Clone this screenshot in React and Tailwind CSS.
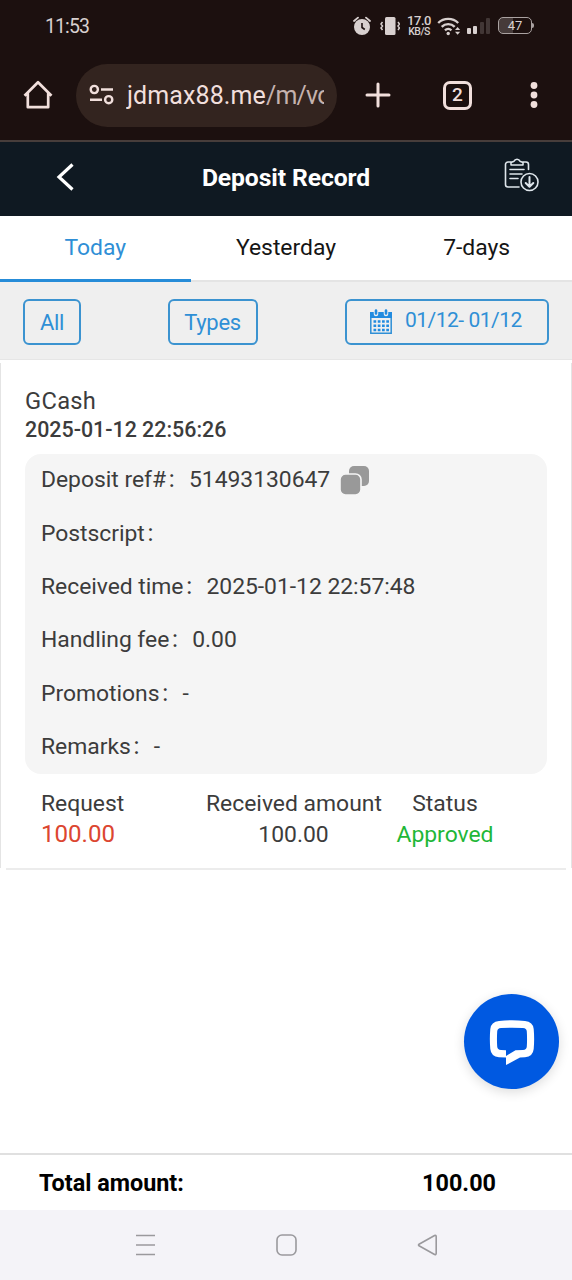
const tabs = ["Today", "Yesterday", "7-days"];

const details = [
  { label: "Deposit ref#", value: "51493130647", copy: true },
  { label: "Postscript", value: "" },
  { label: "Received time", value: "2025-01-12 22:57:48" },
  { label: "Handling fee", value: "0.00" },
  { label: "Promotions", value: "-" },
  { label: "Remarks", value: "-" },
];

const StatusBar = () => {
  return (
    <div className="flex h-[51px] items-center pl-[45px] text-[#d8d0cf]">
      <span className="w-[308px] pt-[2px] text-[19.5px] tracking-[-0.9px]">11:53</span>
      <svg width="18" height="20" viewBox="0 0 18 20" fill="none">
        <circle cx="9" cy="11" r="8" fill="currentColor" />
        <path d="M1 5l4-3.4M17 5l-4-3.4" stroke="currentColor" strokeWidth="1.8" strokeLinecap="round" />
        <path d="M9 7v4.5l2.8 2" stroke="#1c100f" strokeWidth="1.6" />
      </svg>
      <svg className="ml-[9px]" width="20" height="20" viewBox="0 0 20 20" fill="none">
        <rect x="5" y="1" width="10.5" height="18" rx="1.5" fill="currentColor" />
        <path d="M2.5 6L1 8l1.5 2L1 12l1.5 2M18 6l1.5 2-1.5 2 1.5 2-1.5 2" stroke="currentColor" strokeWidth="1.5" />
      </svg>
      <div className="ml-[7px] w-[24px] text-center font-medium whitespace-nowrap">
        <div className="text-[13px] leading-[11px] tracking-[-0.5px]">17.0</div>
        <div className="text-[10.5px] leading-[11px] tracking-[-0.5px]">KB/S</div>
      </div>
      <svg className="ml-[6px]" width="25" height="20" viewBox="0 0 25 20" fill="none" stroke="currentColor" strokeWidth="2.4">
        <path d="M1.2 7a14.3 14.3 0 0 1 20 0M4.7 10.8a9.2 9.2 0 0 1 13 0M8 14.3a4.6 4.6 0 0 1 6.4 0" />
        <circle cx="11.2" cy="17.5" r="1.7" fill="currentColor" stroke="none" />
        <path d="M18 14l2.6-3 2.6 3zM18 15.8l2.6 3 2.6-3z" fill="currentColor" stroke="none" />
      </svg>
      <svg className="ml-[5px]" width="24" height="18" viewBox="0 0 24 18" fill="currentColor">
        <rect x="0" y="11" width="4" height="6" rx="1" />
        <rect x="6" y="9" width="4" height="8" rx="1" />
        <rect x="13" y="5" width="4" height="12" rx="1" opacity=".2" />
        <rect x="19" y="1" width="4" height="16" rx="1" opacity=".2" />
      </svg>
      <div className="ml-[7px] flex h-[17px] w-[34px] items-center justify-center rounded-[5px] border-[1.5px] border-[#aaa2a1] bg-linear-to-r from-[#463b3a] from-45% to-transparent to-45% text-[13px]">
        47
      </div>
      <div className="h-[5px] w-[2px] rounded-r bg-[#aaa2a1]"></div>
    </div>
  );
};

const BrowserBar = () => {
  return (
    <div className="flex h-[89px] items-center pb-[1px] text-[#f1dfdc]">
      <svg className="ml-[23px]" width="30" height="30" viewBox="0 0 30 30" fill="none" stroke="currentColor" strokeWidth="2.7" strokeLinejoin="round">
        <path d="M1.5 15.8L15 2.2l13.5 13.6M4.8 13v14.2h20.4V13" />
      </svg>
      <div className="ml-[23px] flex h-[63px] w-[261px] items-center rounded-full bg-[#33241f] pl-[13px]">
        <svg className="shrink-0" width="25" height="22" viewBox="0 0 25 22" fill="none" stroke="currentColor" strokeWidth="2.4">
          <circle cx="5.3" cy="5.5" r="3.6" />
          <circle cx="19.7" cy="15.7" r="3.6" />
          <path d="M12 5.5h12M1 15.7h12" />
        </svg>
        <div className="ml-[12px] w-[198px] overflow-hidden pt-[2px] pl-[1px] text-[25px] tracking-[0.1px] whitespace-nowrap">
          jdmax88.me<span className="tracking-[-0.8px] text-[#c5b2ae]">/m/vo</span>
        </div>
      </div>
      <svg className="ml-[28px]" width="26" height="26" viewBox="0 0 26 26" stroke="currentColor" strokeWidth="3" strokeLinecap="round">
        <path d="M13 2v22M2 13h22" />
      </svg>
      <div className="ml-[52px] flex h-[29px] w-[29px] items-center justify-center rounded-[7px] border-[3px] border-[#f1dfdc] text-[19px] font-medium">
        2
      </div>
      <svg className="ml-[58px]" width="8" height="28" viewBox="0 0 8 28" fill="currentColor">
        <circle cx="4" cy="4.5" r="3.4" />
        <circle cx="4" cy="14" r="3.4" />
        <circle cx="4" cy="23.5" r="3.4" />
      </svg>
    </div>
  );
};

const Header = () => {
  return (
    <div className="flex h-[76px] items-center border-t-2 border-[#473d3b] bg-[#0f1922] text-white">
      <div className="w-[90px] pb-[4px] pl-[56px]">
        <svg width="18" height="28" viewBox="0 0 18 28" fill="none" stroke="currentColor" strokeWidth="3.2">
          <path d="M16.5 1.5L3 14l13.5 12.5" />
        </svg>
      </div>
      <h1 className="flex-1 pb-[3px] text-center text-[24.7px] font-bold tracking-[-0.1px]">Deposit Record</h1>
      <div className="w-[90px] pb-[9px] pl-[22px]">
        <svg width="35" height="35" viewBox="0 0 35 35" fill="none" stroke="#dfe6ec" strokeWidth="1.6" strokeLinecap="round" strokeLinejoin="round">
          <path d="M7 5H4a2.5 2.5 0 0 0-2.5 2.5v20A2.5 2.5 0 0 0 4 30h11M19 5h3a2.5 2.5 0 0 1 2.5 2.500v5" />
          <path d="M7 8V5.5l3-1.200a3.200 3.200 0 0 1 6 0l3 1.200V8zM6 12.500h14M6 17h12M6 21.500h8" />
          <circle cx="25.5" cy="25" r="8.5" />
          <path d="M25.5 20v9.5M21.7 26l3.8 3.8 3.8-3.8" strokeWidth="2" />
        </svg>
      </div>
    </div>
  );
};

const Filters = () => {
  return (
    <div className="flex h-[78px] items-center justify-between border-b border-[#e6e6e6] bg-[#efefef] px-[23px] pt-[2px] text-[22px] tracking-[-0.3px] text-[#2f8fd6]">
      <button className="h-[46px] w-[58px] rounded-md border-2 border-[#3b93d0] pt-[2px]">All</button>
      <button className="mr-[1px] h-[46px] w-[90px] rounded-md border-2 border-[#3b93d0] pt-[2px]">Types</button>
      <button className="flex h-[46px] w-[204px] items-center rounded-md border-2 border-[#3b93d0] pl-[23px]">
        <svg width="22" height="26" viewBox="0 0 22 26" fill="none">
          <path d="M.8 5h20.4v19.2H.8z" stroke="#2f8fd6" strokeWidth="1.5" />
          <path d="M0 3h22v6H0z" fill="#218be0" />
          <path d="M6 1v4M16 1v4" stroke="#efefef" strokeWidth="4.5" strokeLinecap="round" />
          <path d="M6 1.500v3M16 1.500v3" stroke="#218be0" strokeWidth="2.6" strokeLinecap="round" />
          <path d="M3.5 12.500h15.500M3.500 16.700h15.500M3.500 21h15.500" stroke="#218be0" strokeWidth="2.600" strokeDasharray="2.700 1.560" />
        </svg>
        <span className="mb-[2px] ml-[13px] text-[21px] tracking-[-0.5px]">01/12- 01/12</span>
      </button>
    </div>
  );
};

const RecordCard = () => {
  return (
    <div className="mt-[3px] text-[#3c3c3c]">
      <div className="h-[505px] border-x border-[#e4e4e4] px-6 pt-[24px]">
        <div className="text-[23.7px] leading-[29px] tracking-[0.3px]">GCash</div>
        <div className="text-[21.4px] leading-[27px] font-medium">2025-01-12 22:56:26</div>
        <div className="mt-[11px] grid h-[320px] grid-rows-6 rounded-2xl bg-[#f5f5f5] pl-[16px] text-[22.9px] tracking-[-0.03px]">
          {details.map((item) => (
            <div key={item.label} className="flex items-center">
              <span>{item.label}</span>
              <span className="w-[23px] pt-[2px] pl-[1px] text-[19px]">：</span>
              <span>{item.value}</span>
              {item.copy && (
                <svg className="ml-[10px]" width="29" height="29" viewBox="0 0 29 29" fill="#999">
                  <rect x="9" y="0" width="20" height="20" rx="5" />
                  <rect x="0" y="8" width="21" height="21" rx="5.5" stroke="#f5f5f5" strokeWidth="1.6" />
                </svg>
              )}
            </div>
          ))}
        </div>
        <div className="mt-[14px] flex pl-[16px] text-[22.9px] leading-[31px]">
          <div className="w-[165px]">
            <div>Request</div>
            <div className="text-[24.1px] text-[#dc4630]">100.00</div>
          </div>
          <div className="w-[175px] text-center whitespace-nowrap">
            <div>Received amount</div>
            <div>100.00</div>
          </div>
          <div className="ml-[15px] w-[98px] text-center">
            <div>Status</div>
            <div className="text-[#1fb738]">Approved</div>
          </div>
        </div>
      </div>
      <div className="mx-[6px] border-b-2 border-[#ececec]"></div>
    </div>
  );
};

const App = () => {
  return (
    <div className="relative flex h-[1280px] w-[572px] flex-col bg-white font-[Roboto,'Noto_Sans_CJK_SC',sans-serif]">
      <div className="bg-[#1c100f]">
        <StatusBar />
        <BrowserBar />
      </div>
      <Header />
      <div className="grid h-[66px] grid-cols-3 text-center text-[22.9px] leading-[63px] text-[#151515]">
        {tabs.map((tab, i) => (
          <div key={tab} className={i === 0 ? "h-[66px] border-b-3 border-[#268cd8] text-[#2f8fd6]" : "h-[66px] border-b-2 border-[#e4e4e4]"}>
            {tab}
          </div>
        ))}
      </div>
      <Filters />
      <RecordCard />

      {/* live chat */}
      <button className="absolute top-[994px] right-[13px] flex h-[95px] w-[95px] items-center justify-center rounded-full bg-[#0059e1] shadow-[0_3px_12px_rgba(0,0,0,0.14)]">
        <svg width="46" height="46" viewBox="0 0 46 46" fill="none">
          <path
            fill="#fff"
            fillRule="evenodd"
            d="M10 2Q23 .6 36 2Q44 2.8 44.7 10Q45.6 20 44.7 30Q44 37.5 36 38.3L31 38.6L17 46V38.6L10 38.3Q2 37.5 1.3 30Q.4 20 1.3 10Q2 2.8 10 2ZM12 9Q8.400 9.300 8.200 12.500Q7.700 20 8.200 27.500Q8.400 30.800 12 31L17 31.200V37L26.500 31.200L34 31Q37.600 30.800 37.800 27.500Q38.300 20 37.800 12.500Q37.600 9.300 34 9Q23 8.300 12 9Z"
          />
        </svg>
      </button>

      <div className="mt-auto flex h-[57px] items-center justify-between border-t-2 border-[#e0e0e0] pt-[2px] pr-[76px] pl-[39px] text-[23.4px] font-bold text-black">
        <span>Total amount:</span>
        <span>100.00</span>
      </div>
      <div className="flex h-[70px] items-center justify-between bg-[#f4f3f8] pr-[134px] pl-[135px] text-[#9a999d]">
        <svg width="21" height="22" viewBox="0 0 21 22" fill="none" stroke="currentColor" strokeWidth="1.6">
          <path d="M1 1.5h19M1 11h19M1 20.5h19" />
        </svg>
        <svg width="21" height="22" viewBox="0 0 21 22" fill="none" stroke="currentColor" strokeWidth="1.6">
          <rect x="1" y="1" width="19" height="20" rx="5" />
        </svg>
        <svg width="21" height="22" viewBox="0 0 21 22" fill="none" stroke="currentColor" strokeWidth="1.6" strokeLinejoin="round">
          <path d="M17.6 1.5L2 10.2q-1 .8 0 1.6l15.6 8.7q1.4.4 1.6-1V2.500q-.2-1.400-1.600-1z" />
        </svg>
      </div>
    </div>
  );
};

export default App;
